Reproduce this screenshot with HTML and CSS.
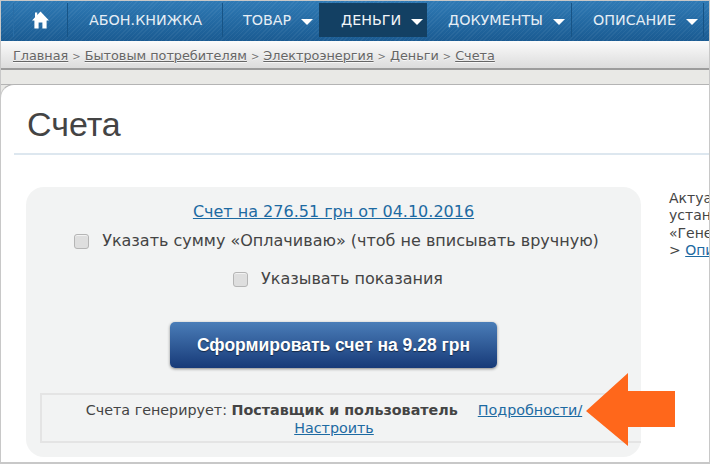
FILE: index.html
```html
<!DOCTYPE html>
<html lang="ru">
<head>
<meta charset="utf-8">
<title>Счета</title>
<link rel="stylesheet" href="styles.css">
</head>
<body>
<div class="frame">
  <nav class="nav">
    <a class="nav-item home"><svg class="home-icon" viewBox="0 0 17 18"><path d="M8.5 0.5 L17 9.5 L14.6 9.5 L14.6 17.5 L10.4 17.5 L10.4 11.5 L6.6 11.5 L6.6 17.5 L2.4 17.5 L2.4 9.5 L0 9.5 L3 6.3 L3 1.5 L5.2 1.5 L5.2 4 Z" fill="#fff"/></svg></a>
    <a class="nav-item abon">АБОН.КНИЖКА</a>
    <a class="nav-item tovar">ТОВАР<i class="caret"></i></a>
    <a class="nav-item active">ДЕНЬГИ<i class="caret"></i></a>
    <a class="nav-item docs">ДОКУМЕНТЫ<i class="caret"></i></a>
    <a class="nav-item desc">ОПИСАНИЕ<i class="caret"></i></a>
  </nav>
  <div class="crumbs">
    <a>Главная</a><span class="sep">&gt;</span><a>Бытовым потребителям</a><span class="sep">&gt;</span><a>Электроэнергия</a><span class="sep">&gt;</span><span>Деньги</span><span class="sep">&gt;</span><a>Счета</a>
  </div>
  <div class="stripe"></div>
  <main class="card">
    <h1 class="title">Счета</h1>
    <div class="content">
      <section class="panel">
        <a class="invoice">Счет на 276.51 грн от 04.10.2016</a>
        <label class="check first"><i class="box"></i>Указать сумму «Оплачиваю» (чтоб не вписывать вручную)</label>
        <label class="check second"><i class="box"></i>Указывать показания</label>
        <button class="submit">Сформировать счет на 9.28 грн</button>
        <div class="note">
          <div class="note-line">Счета генерирует: <b>Поставщик и пользователь</b><a class="more">Подробности/</a></div>
          <a class="setup">Настроить</a>
        </div>
      </section>
      <aside class="side">Актуальные<br>установки<br>«Генерация<br>&gt; <a>Описание</a></aside>
    </div>
    <svg class="arrow" viewBox="0 0 90 74"><path d="M0 38 L42 0 L42 18 L89 18 L89 54 L42 54 L42 73 Z" fill="#ff671b"/></svg>
  </main>
</div>
</body>
</html>
```
FILE: styles.css
```css
html, body { margin: 0; padding: 0; }
body { width: 710px; height: 464px; overflow: hidden; background: #fff; font-family: "DejaVu Sans", sans-serif; color: #444; }
a { cursor: pointer; }
.frame { position: relative; box-sizing: border-box; width: 710px; height: 464px; border: 1px solid #c8c8c8; border-bottom-width: 2px; overflow: hidden; background: #e9e9e6; }

.nav { display: flex; box-sizing: border-box; height: 40px; padding: 2px 0 0 12px; align-items: flex-start;
  background: repeating-linear-gradient(135deg, rgba(255,255,255,.05) 0 1px, rgba(255,255,255,0) 1px 3px), linear-gradient(#2f7ab5, #1a5b92); }
.nav-item { display: flex; align-items: center; box-sizing: border-box; height: 34px; color: #e6eef5; font-size: 14.3px; border-right: 1px solid #175486; }
.home { width: 55px; justify-content: center; border-left: 1px solid #2a6ea6; }
.home-icon { width: 17px; height: 18px; }
.abon { width: 155px; padding-left: 21px; }
.tovar { width: 96px; padding-left: 20px; border-right: 0; }
.active { width: 108px; padding-left: 22px; background: #134063; border-right: 0; color: #f2f5f8; }
.docs { width: 145px; padding-left: 21px; }
.desc { width: 132px; padding-left: 21px; }
.caret { width: 0; height: 0; margin-left: 10px; margin-top: 3px; border-left: 6px solid transparent; border-right: 6px solid transparent; border-top: 6px solid #fff; }

.crumbs { box-sizing: border-box; height: 29px; padding: 7px 0 0 12px; font-size: 12.8px; line-height: 16px; color: #666; background: linear-gradient(#fbfbfb, #dcdcdc); border-bottom: 2px solid #9c9c9c; white-space: nowrap; text-shadow: 0 1px 0 rgba(255,255,255,.7); }
.crumbs a { text-decoration: underline; }
.sep { margin: 0 4px; font-size: 10px; color: #777; }

.stripe { height: 15px; background: #e9e9e6; border-bottom: 1px solid #b4b4b4; box-sizing: border-box; }

.card { position: relative; height: 379px; margin: -1px 0 0 -1px; background: #fff; border-top: 1px solid #b4b4b4; border-left: 1px solid #c8c8c8; border-top-left-radius: 14px; }
.title { box-sizing: border-box; height: 69px; margin: 0; padding: 15px 0 0 26px; font: 400 34px/48px "Liberation Sans", sans-serif; color: #444; }
.title::after { content: ""; display: block; height: 2px; margin: 5px 0 0 -13px; background: #dde7ef; }

.content { display: flex; margin-top: 33px; padding-left: 25px; }
.panel { box-sizing: border-box; flex: none; width: 615px; height: 270px; display: flex; flex-direction: column; align-items: center; padding: 15px 0 0 14px; background: #f2f3f3; border-radius: 18px; }
.invoice { margin-left: -14px; font-size: 16px; line-height: 20px; color: #1d6aa2; text-decoration: underline; }
.check { display: flex; align-items: center; font-size: 16px; line-height: 20px; color: #444; }
.first { margin: 9px 0 0 -8px; }
.second { margin: 18px 0 0 -5px; }
.box { box-sizing: border-box; width: 15px; height: 15px; margin-right: 13px; border: 1px solid #b5b5b5; border-radius: 3px; background: #dedede; box-shadow: inset 0 1px 0 #f2f2f2; }
.submit { margin: 33px 0 0 -14px; width: 327px; height: 46px; padding: 0; border: 0; border-radius: 5px; background: linear-gradient(#4a7db8, #173a78); box-shadow: 0 1px 3px rgba(0,0,0,.45); color: #fff; font: 700 17.5px "Liberation Sans", sans-serif; text-shadow: 0 1px 1px rgba(0,0,0,.5); }
.note { box-sizing: border-box; align-self: stretch; height: 50px; margin-top: 25px; padding: 6px 15px 0 0; border: 2px solid #e4e4e4; border-right: 0; text-align: center; font-size: 14.3px; line-height: 18px; color: #444; }
.note-line { white-space: nowrap; }
.more { margin-left: 20px; color: #1d6aa2; text-decoration: underline; }
.setup { color: #1d6aa2; text-decoration: underline; }
.side { flex: none; margin: 3px 0 0 28px; font-size: 14px; line-height: 17.4px; color: #444; white-space: nowrap; }
.side a { color: #1d6aa2; text-decoration: underline; }

.arrow { position: absolute; left: 585px; top: 288px; width: 90px; height: 74px; }
```
